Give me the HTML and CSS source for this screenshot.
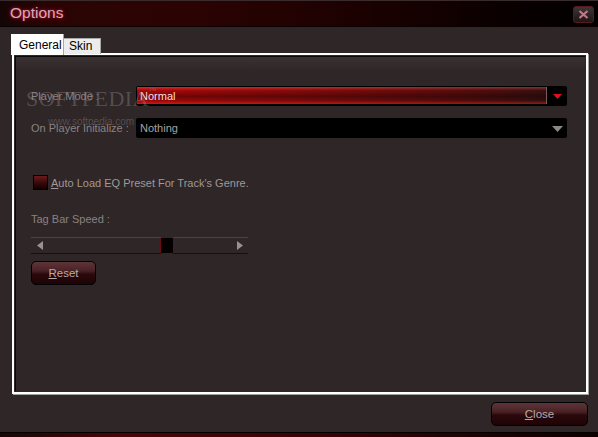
FILE: index.html
```html
<!DOCTYPE html>
<html>
<head>
<meta charset="utf-8">
<link rel="stylesheet" href="styles.css">
</head>
<body>
<div class="window">
  <div class="titlebar">
    <span class="title">Options</span>
    <span class="xbtn">
      <svg width="11" height="9" viewBox="0 0 11 9"><path d="M1.5 1 L9.5 8 M9.5 1 L1.5 8" stroke="#c07884" stroke-width="2.2" fill="none"/></svg>
    </span>
  </div>
  <div class="content">
    <div class="tabs">
      <div class="tab active">General</div>
      <div class="tab">Skin</div>
    </div>
    <div class="panel">
      <div class="panel-inner">
        <div class="row row1">
          <span class="label">Player Mode :</span>
          <div class="combo red">
            <span class="value">Normal</span>
            <span class="arrow"><svg width="9" height="5" viewBox="0 0 9 5"><path d="M0 0 H9 L4.5 5 Z" fill="#e0101a"/></svg></span>
          </div>
        </div>
        <div class="row row2">
          <span class="label">On Player Initialize :</span>
          <div class="combo black">
            <span class="value">Nothing</span>
            <span class="arrow"><svg width="11" height="6" viewBox="0 0 11 6"><path d="M0 0 H11 L5.5 6 Z" fill="#8e8686"/></svg></span>
          </div>
        </div>
        <div class="check-row">
          <span class="checkbox"></span>
          <span class="check-label"><u>A</u>uto Load EQ Preset For Track's Genre.</span>
        </div>
        <div class="speed-label">Tag Bar Speed :</div>
        <div class="slider">
          <svg class="sarrow" width="6" height="9" viewBox="0 0 6 9"><path d="M6 0 V9 L0 4.5 Z" fill="#9a9292"/></svg>
          <span class="thumb"></span>
          <svg class="sarrow" width="6" height="9" viewBox="0 0 6 9"><path d="M0 0 V9 L6 4.5 Z" fill="#9a9292"/></svg>
        </div>
        <div class="btn reset"><u>R</u>eset</div>
        <div class="watermark">SOFTPEDIA<sup>™</sup></div>
        <div class="watermark-url">www.softpedia.com</div>
      </div>
    </div>
    <div class="footer">
      <div class="btn close"><u>C</u>lose</div>
    </div>
  </div>
  <div class="bottomline"></div>
</div>
</body>
</html>
```
FILE: styles.css
```css
html, body {
  margin: 0;
  padding: 0;
  background: #2e2627;
}
.window {
  width: 598px;
  height: 437px;
  display: flex;
  flex-direction: column;
  background: #2e2627;
  font-family: "Liberation Sans", Arial, sans-serif;
  font-size: 11px;
  overflow: hidden;
}
.titlebar {
  flex: none;
  display: flex;
  align-items: center;
  justify-content: space-between;
  padding: 0 4px 0 10px;
  border-top: 1px solid #3a2c2c;
  border-bottom: 1px solid #0a0000;
  background: linear-gradient(to right, #140606 0%, #2a0404 8%, #2c0303 30%, #1c0101 60%, #080000 88%, #030000 100%);
  box-sizing: border-box;
  height: 27px;
}
.title {
  font-size: 15.5px;
  color: #d4a8bc;
  text-shadow: 0 0 4px #c0102a, 0 0 2px #901020;
  margin-top: -1px;
}
.xbtn {
  width: 19px;
  height: 15px;
  border: 1px solid #5a1a20;
  border-radius: 3px;
  background: linear-gradient(#3e3434, #1c1616);
  display: flex;
  align-items: center;
  justify-content: center;
  margin-top: 1px;
}
.content {
  flex: 1;
  display: flex;
  flex-direction: column;
  padding: 7px 0 0 11px;
}
.tabs {
  display: flex;
  align-items: flex-end;
  height: 20px;
  position: relative;
  z-index: 2;
  font-size: 12px;
}
.tab {
  height: 16px;
  line-height: 15px;
  padding: 0 5px;
  background: #ececec;
  border: 1px solid #a8a8a8;
  border-bottom: none;
  color: #000;
  box-sizing: border-box;
  width: 38px;
}
.tab.active {
  height: 21px;
  width: 52px;
  background: #fff;
  border: 2px solid #fff;
  border-bottom: none;
  line-height: 18px;
  padding: 0 0 0 6px;
  margin-bottom: -1px;
  box-shadow: 1px 0 0 #a0a0a0;
}
.panel {
  width: 576px;
  height: 341px;
  box-sizing: border-box;
  border: 2px solid #fff;
  margin-left: 1px;
  margin-top: -1px;
  box-shadow: 1px 1px 0 #a0a0a0;
  padding: 1px;
  background: #2e2627;
}
.panel-inner {
  height: 100%;
  box-sizing: border-box;
  border-left: 1px solid #0c0808;
  border-top: 1px solid #0c0808;
  background: linear-gradient(#3a3232 0px, #2e2627 14px);
  padding: 29px 0 0 15px;
  position: relative;
  display: flex;
  flex-direction: column;
  align-items: flex-start;
}
.row {
  display: flex;
  align-items: center;
  width: 536px;
}
.label {
  width: 105px;
  white-space: nowrap;
  color: #8a8282;
}
.combo {
  width: 431px;
  height: 20px;
  box-sizing: border-box;
  display: flex;
  align-items: center;
  justify-content: space-between;
  border-radius: 2px;
  background: #000;
}
.combo .value {
  padding-left: 4px;
}
.combo.red {
  position: relative;
}
.combo.red::before {
  content: "";
  position: absolute;
  left: 1px;
  top: 1px;
  bottom: 2px;
  width: 409px;
  background:
    linear-gradient(rgba(255,120,120,0.35) 0%, rgba(0,0,0,0.0) 20%, rgba(0,0,0,0.35) 55%, rgba(0,0,0,0.1) 80%, rgba(255,40,40,0.45) 100%),
    linear-gradient(to right, #b00808 0%, #8a0a0a 40%, #5a0c0c 80%, #3a1010 100%);
  border-right: 1px solid #7a5a5a;
}
.combo.red .value {
  position: relative;
  color: #ffdede;
}
.combo.red .arrow {
  position: relative;
  width: 20px;
  display: flex;
  justify-content: center;
  margin-top: 1px;
}
.combo.black .value {
  color: #a8a0a0;
}
.combo.black .arrow {
  width: 20px;
  display: flex;
  justify-content: center;
  margin-top: 1px;
}
.row2 {
  margin-top: 12px;
}
.check-row {
  display: flex;
  align-items: center;
  margin-top: 37px;
  margin-left: 2px;
}
.checkbox {
  width: 15px;
  height: 15px;
  box-sizing: border-box;
  border: 1px solid #000;
  background: linear-gradient(#6a1c1e 0%, #3a0a0c 50%, #120000 100%);
  margin-right: 3px;
}
.check-label {
  color: #a09898;
}
.speed-label {
  color: #8a8282;
  margin-top: 23px;
  line-height: 13px;
}
.slider {
  margin-top: 11px;
  width: 217px;
  height: 17px;
  box-sizing: border-box;
  border-top: 1px solid #4a4243;
  border-bottom: 1px solid #141010;
  display: flex;
  align-items: center;
  padding: 0 5px 0 6px;
  justify-content: space-between;
  position: relative;
}
.thumb {
  position: absolute;
  left: 129px;
  top: -1px;
  width: 14px;
  height: 17px;
  box-sizing: border-box;
  border: 1px solid #6a0c10;
  border-radius: 2px;
  background: #050000;
}
.btn {
  display: flex;
  align-items: center;
  justify-content: center;
  box-sizing: border-box;
  border: 1px solid #000;
  border-radius: 5px;
  color: #b8aaaa;
  font-size: 11.5px;
  background: linear-gradient(#5e3438 0%, #4a2226 40%, #2a080c 55%, #1e0406 100%);
}
.reset {
  width: 65px;
  height: 24px;
  margin-top: 7px;
}
.footer {
  display: flex;
  justify-content: flex-end;
  padding-right: 10px;
  margin-top: 8px;
}
.close {
  width: 97px;
  height: 24px;
}
.bottomline {
  height: 4px;
  flex: none;
  border-top: 1px solid #050000;
  background: linear-gradient(to right, #1a0606 0%, #4a0606 20%, #3a0404 50%, #200202 80%, #100000 100%);
}
.watermark {
  position: absolute;
  left: 10px;
  top: 29px;
  font-family: "Liberation Serif", serif;
  font-size: 22px;
  letter-spacing: 0.5px;
  color: rgba(150,140,140,0.4);
  pointer-events: none;
}
.watermark sup {
  font-size: 8px;
  vertical-align: top;
}
.watermark-url {
  position: absolute;
  left: 32px;
  top: 59px;
  font-size: 10px;
  color: rgba(150,140,140,0.4);
}
```
